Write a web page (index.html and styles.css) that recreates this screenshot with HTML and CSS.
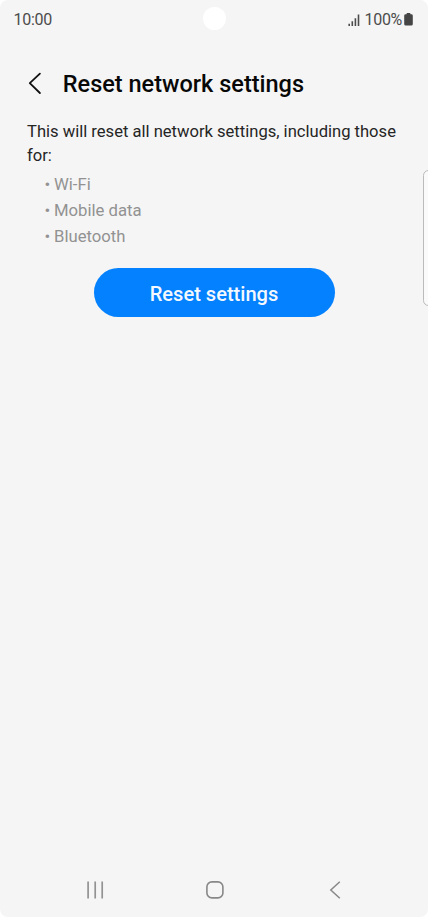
FILE: index.html
```html
<!DOCTYPE html>
<html lang="en">
<head>
<meta charset="utf-8">
<meta name="viewport" content="width=device-width, initial-scale=1">
<title>Reset network settings</title>
<link rel="stylesheet" href="styles.css">
</head>
<body>
<div class="screen">
  <header class="status">
    <span class="time">10:00</span>
    <span class="camera"></span>
    <div class="indicators">
      <svg class="signal" width="12" height="12" viewBox="0 0 12 12"><path d="M1.2 9.8V12M4.3 7.3V12M7.4 4.3V12M10.5 0.5V12" stroke="#4c4c4c" stroke-width="1.6"/></svg>
      <span class="percent">100%</span>
      <svg class="battery" width="9" height="13" viewBox="0 0 9 13"><path d="M2.6 1.3V.6Q2.6 0 3.2 0H5.8Q6.4 0 6.4.6V1.3H7.4Q8.8 1.3 8.8 2.7V11Q8.8 12.5 7.3 12.5H1.7Q.2 12.5 .2 11V2.7Q.2 1.3 1.6 1.3Z" fill="#454545"/></svg>
    </div>
  </header>
  <div class="titlebar">
    <svg class="back" width="14" height="23" viewBox="0 0 14 23"><path d="M11.9 1.6L1.8 11.2L11.9 21" fill="none" stroke="#111" stroke-width="1.8" stroke-linecap="round" stroke-linejoin="round"/></svg>
    <h1>Reset network settings</h1>
  </div>
  <main>
    <p class="intro">This will reset all network settings, including those for:</p>
    <ul class="items">
      <li>Wi-Fi</li>
      <li>Mobile data</li>
      <li>Bluetooth</li>
    </ul>
    <button class="reset" type="button">Reset settings</button>
  </main>
  <div class="edge"></div>
  <nav class="nav">
    <svg width="18" height="18" viewBox="0 0 18 18"><path d="M1.1 .5V17.5M8.2 .5V17.5M15.2 .5V17.5" stroke="#929292" stroke-width="1.7"/></svg>
    <svg width="18" height="18" viewBox="0 0 18 18"><rect x=".9" y=".9" width="16" height="16" rx="5" fill="none" stroke="#888" stroke-width="1.6"/></svg>
    <svg width="18" height="18" viewBox="0 0 18 18"><path d="M14.8 .8L5.8 9L14.8 17.2" fill="none" stroke="#888" stroke-width="1.5"/></svg>
  </nav>
</div>
</body>
</html>
```
FILE: styles.css
```css
* { box-sizing: border-box; }
body { margin: 0; background: #fff; font-family: Roboto, "Liberation Sans", sans-serif; }
.screen {
  position: relative;
  display: flex;
  flex-direction: column;
  height: 917px;
  overflow: hidden;
  background: #f5f5f5;
  border-radius: 8px;
}
.status {
  display: grid;
  grid-template-columns: 1fr 23px 1fr;
  align-items: center;
  height: 38px;
  padding: 0 15px 0 13px;
  color: #4c4c4c;
  font-size: 16px;
}
.time { padding-left: 0.5px; font-size: 16px; letter-spacing: -0.25px; }
.camera { width: 23px; height: 23px; margin: -2px 0 0 1px; border-radius: 50%; background: #fff; }
.indicators { display: flex; align-items: center; justify-content: flex-end; }
.signal { margin: 2px 5px 0 0; }
.percent { letter-spacing: -0.3px; }
.battery { margin-left: 2px; }
.titlebar {
  display: flex;
  align-items: center;
  height: 46px;
  margin-top: 23px;
  padding-left: 28px;
}
.back { margin-top: -2px; }
h1 { margin: -1px 0 0 20.8px; color: #080808; font-size: 23.5px; font-weight: 500; line-height: 30px; white-space: nowrap; }
main { display: flex; flex-direction: column; padding: 13px 27px 0; }
.intro { margin: 0; color: #252525; font-size: 16.6px; line-height: 24px; letter-spacing: -0.01px; }
.items { margin: 4px 0 0 18px; padding: 0; list-style: none; color: #929292; font-size: 16.7px; line-height: 26px; }
.items li { display: flex; }
.items li::before { content: "•"; width: 9px; margin: -1px 0.5px 0 -0.5px; font-size: 17px; }
.reset {
  align-self: center;
  width: 241px;
  height: 49px;
  margin: 18px 0 0;
  padding: 2px 0 0;
  border: 0;
  border-radius: 25px;
  background: #0381fe;
  color: #f4f8ff;
  font: 500 20.1px/30px Roboto, "Liberation Sans", sans-serif;
}
.edge {
  position: absolute;
  top: 170px;
  right: -6px;
  width: 11px;
  height: 136px;
  border: 1px solid #bbb;
  border-radius: 6px;
  background: #fafafa;
}
.nav {
  display: flex;
  justify-content: space-between;
  margin-top: auto;
  padding: 0 85px 18px 87px;
}
```
